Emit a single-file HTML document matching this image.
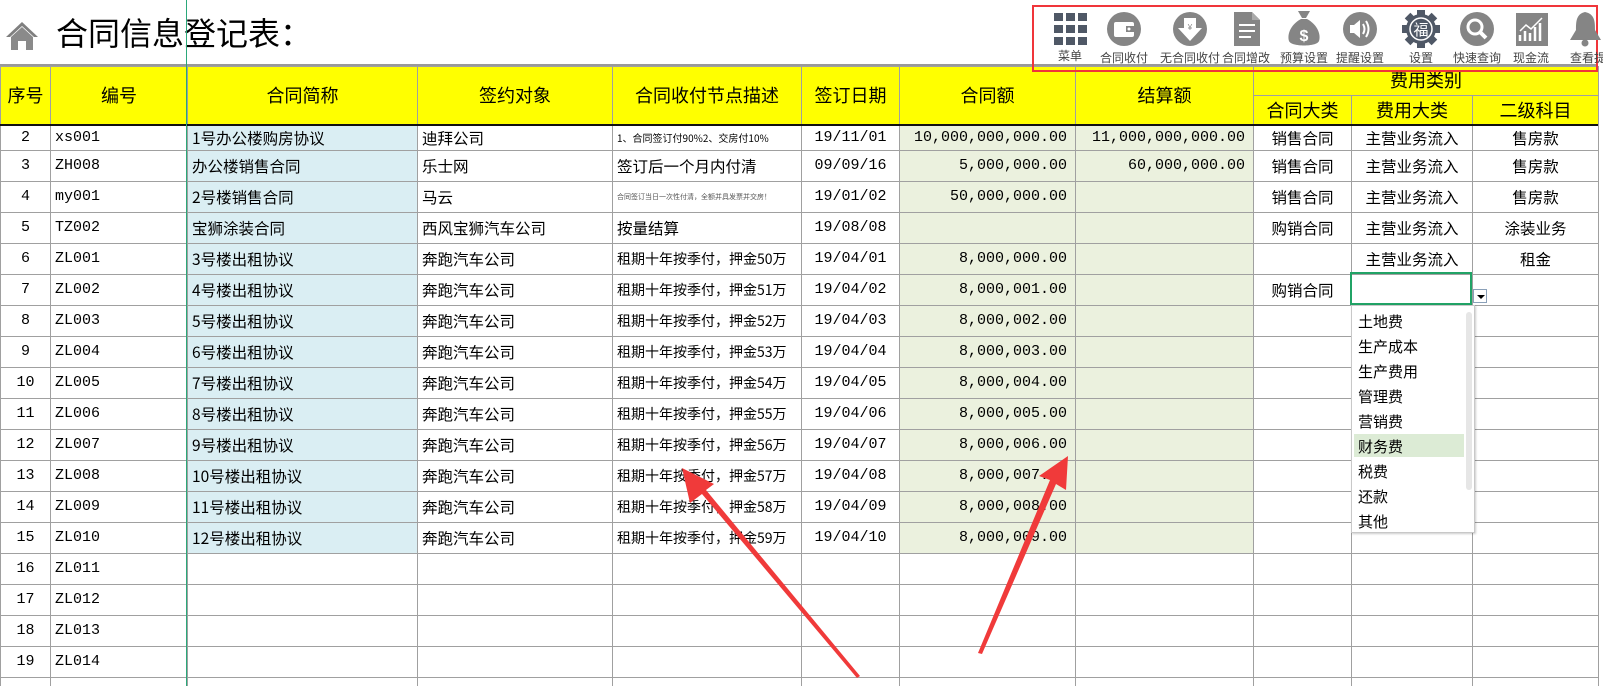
<!DOCTYPE html>
<html style="overflow:hidden;height:686px"><head><meta charset="utf-8">
<style>
*{margin:0;padding:0;box-sizing:border-box}
body{width:1603px;height:686px;overflow:hidden;background:#fff;position:relative;font-family:"Liberation Mono","Noto Sans CJK SC",monospace;font-size:15px;color:#000}
.abs{position:absolute}
table{position:absolute;left:0;top:66px;border-collapse:collapse;table-layout:fixed;width:1598px}
td{border:1px solid #a0a0a0;height:31px;padding:0 4px;white-space:nowrap;overflow:hidden;vertical-align:middle;line-height:18px}
tr.first td{height:25px}
tr.h td{background:#ffff00;font-family:"Liberation Sans","Noto Sans CJK SC",sans-serif;font-size:18px;text-align:center;height:29px;padding:0}
tr.h2 td{height:30px}
.c{text-align:center}.r{text-align:right;padding-right:8px}
.b{background:#daeef3}.g{background:#ebf1de}
.cj{font-family:"Noto Sans CJK SC",sans-serif;font-size:15.5px}
td.d{font-size:14px}
.tb{position:absolute;top:49px;font-family:"Liberation Sans","Noto Sans CJK SC",sans-serif;font-size:12px;color:#444;transform:translateX(-50%);white-space:nowrap}
</style></head><body>
<svg class="abs" style="left:5px;top:20px" width="34" height="32" viewBox="0 0 34 32"><path d="M17 2 L1 17 L5 17 L17 6 L29 17 L33 17 Z" fill="#7f7f7f"/><path d="M6 17 L17 7 L28 17 L28 30 L21 30 L21 21 L13 21 L13 30 L6 30 Z" fill="#8a8a8a"/></svg>
<div class="abs" style="left:56px;top:12px;font-family:'Liberation Sans','Noto Sans CJK SC',sans-serif;font-size:32px;line-height:44px">合同信息登记表：</div>
<div class="abs" style="left:0;top:64px;width:1598px;height:2px;background:#999"></div>

<table>
<colgroup><col style="width:50px"><col style="width:137px"><col style="width:230px"><col style="width:195px"><col style="width:189px"><col style="width:98px"><col style="width:176px"><col style="width:178px"><col style="width:98px"><col style="width:121px"><col style="width:126px"></colgroup>
<tr class="h"><td rowspan="2">序号</td><td rowspan="2">编号</td><td rowspan="2">合同简称</td><td rowspan="2">签约对象</td><td rowspan="2">合同收付节点描述</td><td rowspan="2">签订日期</td><td rowspan="2">合同额</td><td rowspan="2">结算额</td><td colspan="3">费用类别</td></tr>
<tr class="h h2"><td>合同大类</td><td>费用大类</td><td>二级科目</td></tr>
<tr class="first"><td class="c">2</td><td>xs001</td><td class="b cj">1号办公楼购房协议</td><td class="cj">迪拜公司</td><td class="cj" style="font-size:10px">1、合同签订付90%2、交房付10%</td><td class="c">19/11/01</td><td class="r g">10,000,000,000.00</td><td class="r g">11,000,000,000.00</td><td class="c cj">销售合同</td><td class="c cj">主营业务流入</td><td class="c cj">售房款</td></tr>
<tr><td class="c">3</td><td>ZH008</td><td class="b cj">办公楼销售合同</td><td class="cj">乐士网</td><td class="cj">签订后一个月内付清</td><td class="c">09/09/16</td><td class="r g">5,000,000.00</td><td class="r g">60,000,000.00</td><td class="c cj">销售合同</td><td class="c cj">主营业务流入</td><td class="c cj">售房款</td></tr>
<tr><td class="c">4</td><td>my001</td><td class="b cj">2号楼销售合同</td><td class="cj">马云</td><td class="cj" style="font-size:7px;color:#555">合同签订当日一次性付清，全额并具发票并交房！</td><td class="c">19/01/02</td><td class="r g">50,000,000.00</td><td class="g"></td><td class="c cj">销售合同</td><td class="c cj">主营业务流入</td><td class="c cj">售房款</td></tr>
<tr><td class="c">5</td><td>TZ002</td><td class="b cj">宝狮涂装合同</td><td class="cj">西风宝狮汽车公司</td><td class="cj">按量结算</td><td class="c">19/08/08</td><td class="g"></td><td class="g"></td><td class="c cj">购销合同</td><td class="c cj">主营业务流入</td><td class="c cj">涂装业务</td></tr>
<tr><td class="c">6</td><td>ZL001</td><td class="b cj">3号楼出租协议</td><td class="cj">奔跑汽车公司</td><td class="cj d">租期十年按季付，押金50万</td><td class="c">19/04/01</td><td class="r g">8,000,000.00</td><td class="g"></td><td></td><td class="c cj">主营业务流入</td><td class="c cj">租金</td></tr>
<tr><td class="c">7</td><td>ZL002</td><td class="b cj">4号楼出租协议</td><td class="cj">奔跑汽车公司</td><td class="cj d">租期十年按季付，押金51万</td><td class="c">19/04/02</td><td class="r g">8,000,001.00</td><td class="g"></td><td class="c cj">购销合同</td><td></td><td></td></tr>
<tr><td class="c">8</td><td>ZL003</td><td class="b cj">5号楼出租协议</td><td class="cj">奔跑汽车公司</td><td class="cj d">租期十年按季付，押金52万</td><td class="c">19/04/03</td><td class="r g">8,000,002.00</td><td class="g"></td><td></td><td></td><td></td></tr>
<tr><td class="c">9</td><td>ZL004</td><td class="b cj">6号楼出租协议</td><td class="cj">奔跑汽车公司</td><td class="cj d">租期十年按季付，押金53万</td><td class="c">19/04/04</td><td class="r g">8,000,003.00</td><td class="g"></td><td></td><td></td><td></td></tr>
<tr><td class="c">10</td><td>ZL005</td><td class="b cj">7号楼出租协议</td><td class="cj">奔跑汽车公司</td><td class="cj d">租期十年按季付，押金54万</td><td class="c">19/04/05</td><td class="r g">8,000,004.00</td><td class="g"></td><td></td><td></td><td></td></tr>
<tr><td class="c">11</td><td>ZL006</td><td class="b cj">8号楼出租协议</td><td class="cj">奔跑汽车公司</td><td class="cj d">租期十年按季付，押金55万</td><td class="c">19/04/06</td><td class="r g">8,000,005.00</td><td class="g"></td><td></td><td></td><td></td></tr>
<tr><td class="c">12</td><td>ZL007</td><td class="b cj">9号楼出租协议</td><td class="cj">奔跑汽车公司</td><td class="cj d">租期十年按季付，押金56万</td><td class="c">19/04/07</td><td class="r g">8,000,006.00</td><td class="g"></td><td></td><td></td><td></td></tr>
<tr><td class="c">13</td><td>ZL008</td><td class="b cj">10号楼出租协议</td><td class="cj">奔跑汽车公司</td><td class="cj d">租期十年按季付，押金57万</td><td class="c">19/04/08</td><td class="r g">8,000,007.00</td><td class="g"></td><td></td><td></td><td></td></tr>
<tr><td class="c">14</td><td>ZL009</td><td class="b cj">11号楼出租协议</td><td class="cj">奔跑汽车公司</td><td class="cj d">租期十年按季付，押金58万</td><td class="c">19/04/09</td><td class="r g">8,000,008.00</td><td class="g"></td><td></td><td></td><td></td></tr>
<tr><td class="c">15</td><td>ZL010</td><td class="b cj">12号楼出租协议</td><td class="cj">奔跑汽车公司</td><td class="cj d">租期十年按季付，押金59万</td><td class="c">19/04/10</td><td class="r g">8,000,009.00</td><td class="g"></td><td></td><td></td><td></td></tr>
<tr><td class="c">16</td><td>ZL011</td><td></td><td></td><td></td><td></td><td></td><td></td><td></td><td></td><td></td></tr>
<tr><td class="c">17</td><td>ZL012</td><td></td><td></td><td></td><td></td><td></td><td></td><td></td><td></td><td></td></tr>
<tr><td class="c">18</td><td>ZL013</td><td></td><td></td><td></td><td></td><td></td><td></td><td></td><td></td><td></td></tr>
<tr><td class="c">19</td><td>ZL014</td><td></td><td></td><td></td><td></td><td></td><td></td><td></td><td></td><td></td></tr>
<tr><td></td><td></td><td></td><td></td><td></td><td></td><td></td><td></td><td></td><td></td><td></td></tr>
</table>

<div class="abs" style="left:186px;top:0;width:1px;height:686px;background:#2aa87a;z-index:2"></div>
<div class="abs" style="left:0;top:124px;width:1598px;height:2px;background:#111"></div>

<div class="abs" style="left:1350px;top:272px;width:122px;height:33px;border:2px solid #21a366"></div>
<div class="abs" style="left:1473px;top:289px;width:14px;height:14px;border:1px solid #8aa0b8;background:#fff"><div style="position:absolute;left:3px;top:5px;width:0;height:0;border-left:4px solid transparent;border-right:4px solid transparent;border-top:4px solid #000"></div></div>
<div class="abs cj" style="left:1351px;top:305px;width:124px;height:228px;background:#fff;border:1px solid #c8c8c8;box-shadow:1px 1px 2px rgba(0,0,0,.2);font-size:15px">
<div class="abs" style="left:2px;top:128px;width:110px;height:23px;background:#dcebd5"></div>
<div class="abs" style="left:114px;top:6px;width:6px;height:178px;background:#e6e6e6;border-radius:3px"></div>
<div class="abs" style="left:6px;top:3px;line-height:25px">土地费<br>生产成本<br>生产费用<br>管理费<br>营销费<br>财务费<br>税费<br>还款<br>其他</div>
</div>

<div class="abs" style="left:1032px;top:5px;width:566px;height:67px;border:2px solid #f0353a"></div>
<svg class="abs" style="left:1050px;top:11px" width="40" height="38" viewBox="0 0 40 38" fill="#4f5866">
<rect x="4" y="2" width="9" height="8"/><rect x="16" y="2" width="9" height="8"/><rect x="28" y="2" width="9" height="8"/>
<rect x="4" y="14" width="9" height="8"/><rect x="16" y="14" width="9" height="8"/><rect x="28" y="14" width="9" height="8"/>
<rect x="4" y="26" width="9" height="8"/><rect x="16" y="26" width="9" height="8"/><rect x="28" y="26" width="9" height="8"/></svg>
<div class="tb" style="left:1070px;top:47px">菜单</div>
<svg class="abs" style="left:1106px;top:11px" width="36" height="36"><circle cx="18" cy="18" r="17" fill="#858585"/><rect x="8" y="11" width="20" height="15" rx="2" fill="#fff"/><rect x="20" y="15" width="8" height="6" fill="#858585"/><circle cx="23" cy="18" r="1.5" fill="#fff"/></svg>
<div class="tb" style="left:1124px">合同收付</div>
<svg class="abs" style="left:1172px;top:11px" width="36" height="36"><circle cx="18" cy="18" r="17" fill="#858585"/><path d="M12 7 H24 V17 H30 L18 30 L6 17 H12 Z" fill="#fff"/><text x="18" y="19" font-size="8" text-anchor="middle" fill="#858585" font-family="Liberation Sans">¥</text></svg>
<div class="tb" style="left:1190px">无合同收付</div>
<svg class="abs" style="left:1232px;top:10px" width="30" height="38"><path d="M2 2 H20 L28 10 V36 H2 Z" fill="#858585"/><path d="M20 2 V10 H28" fill="#aaa"/><rect x="7" y="14" width="16" height="2" fill="#fff"/><rect x="7" y="20" width="16" height="2" fill="#fff"/><rect x="7" y="26" width="12" height="2" fill="#fff"/></svg>
<div class="tb" style="left:1246px">合同增改</div>
<svg class="abs" style="left:1286px;top:9px" width="36" height="40"><path d="M12 2 L24 2 L20 9 L16 9 Z" fill="#858585"/><path d="M15 10 H21 C32 16 35 26 33 32 C31 38 5 38 3 32 C1 26 4 16 15 10 Z" fill="#858585"/><text x="18" y="32" font-size="16" text-anchor="middle" fill="#fff" font-family="Liberation Sans" font-weight="bold">$</text></svg>
<div class="tb" style="left:1304px">预算设置</div>
<svg class="abs" style="left:1342px;top:11px" width="36" height="36"><circle cx="18" cy="18" r="17" fill="#858585"/><path d="M8 14 H12 L18 9 V27 L12 22 H8 Z" fill="#fff"/><path d="M21 13 Q24 18 21 23 M24 10 Q29 18 24 26" stroke="#fff" stroke-width="2" fill="none"/></svg>
<div class="tb" style="left:1360px">提醒设置</div>
<svg class="abs" style="left:1401px;top:9px" width="40" height="40" viewBox="0 0 40 40"><g fill="#4f5866"><circle cx="20" cy="20" r="15"/><rect x="16" y="1" width="8" height="38"/><rect x="1" y="16" width="38" height="8"/><rect x="16" y="1" width="8" height="38" transform="rotate(45 20 20)"/><rect x="16" y="1" width="8" height="38" transform="rotate(-45 20 20)"/></g><circle cx="20" cy="20" r="11" fill="none" stroke="#fff" stroke-width="1.5"/><text x="20" y="26" font-size="15" text-anchor="middle" fill="#fff" font-family="Noto Sans CJK SC">福</text></svg>
<div class="tb" style="left:1421px">设置</div>
<svg class="abs" style="left:1459px;top:11px" width="36" height="36"><circle cx="18" cy="18" r="17" fill="#858585"/><circle cx="16" cy="16" r="7" fill="none" stroke="#fff" stroke-width="3"/><path d="M21 21 L27 27" stroke="#fff" stroke-width="4"/></svg>
<div class="tb" style="left:1477px">快速查询</div>
<svg class="abs" style="left:1516px;top:13px" width="32" height="33"><rect x="0" y="0" width="32" height="33" fill="#858585"/><path d="M4 28 V22 M9 28 V18 M14 28 V20 M19 28 V14 M24 28 V10" stroke="#fff" stroke-width="2.5"/><path d="M4 18 L10 12 L15 16 L26 5" stroke="#fff" stroke-width="1.5" fill="none"/></svg>
<div class="tb" style="left:1531px">现金流</div>
<svg class="abs" style="left:1568px;top:10px" width="35" height="38"><path d="M17 2 C8 4 8 12 8 20 L2 30 H33 L27 20 C27 12 27 4 17 2 Z" fill="#858585"/><circle cx="17" cy="33" r="3.5" fill="#858585"/></svg>
<div class="abs" style="left:1570px;top:49px;font-family:'Liberation Sans','Noto Sans CJK SC',sans-serif;font-size:12px;color:#444;white-space:nowrap">查看提</div>

<svg class="abs" style="left:0;top:0;z-index:3" width="1603" height="686">
<polygon points="860,676 857,678 702,494 690,503 682,468 714,484 706,490" fill="#f03a3a"/>
<polygon points="982,654 978,653 1050,480 1039,476 1068,456 1066,490 1056,484" fill="#f03a3a"/>
</svg>
</body></html>
